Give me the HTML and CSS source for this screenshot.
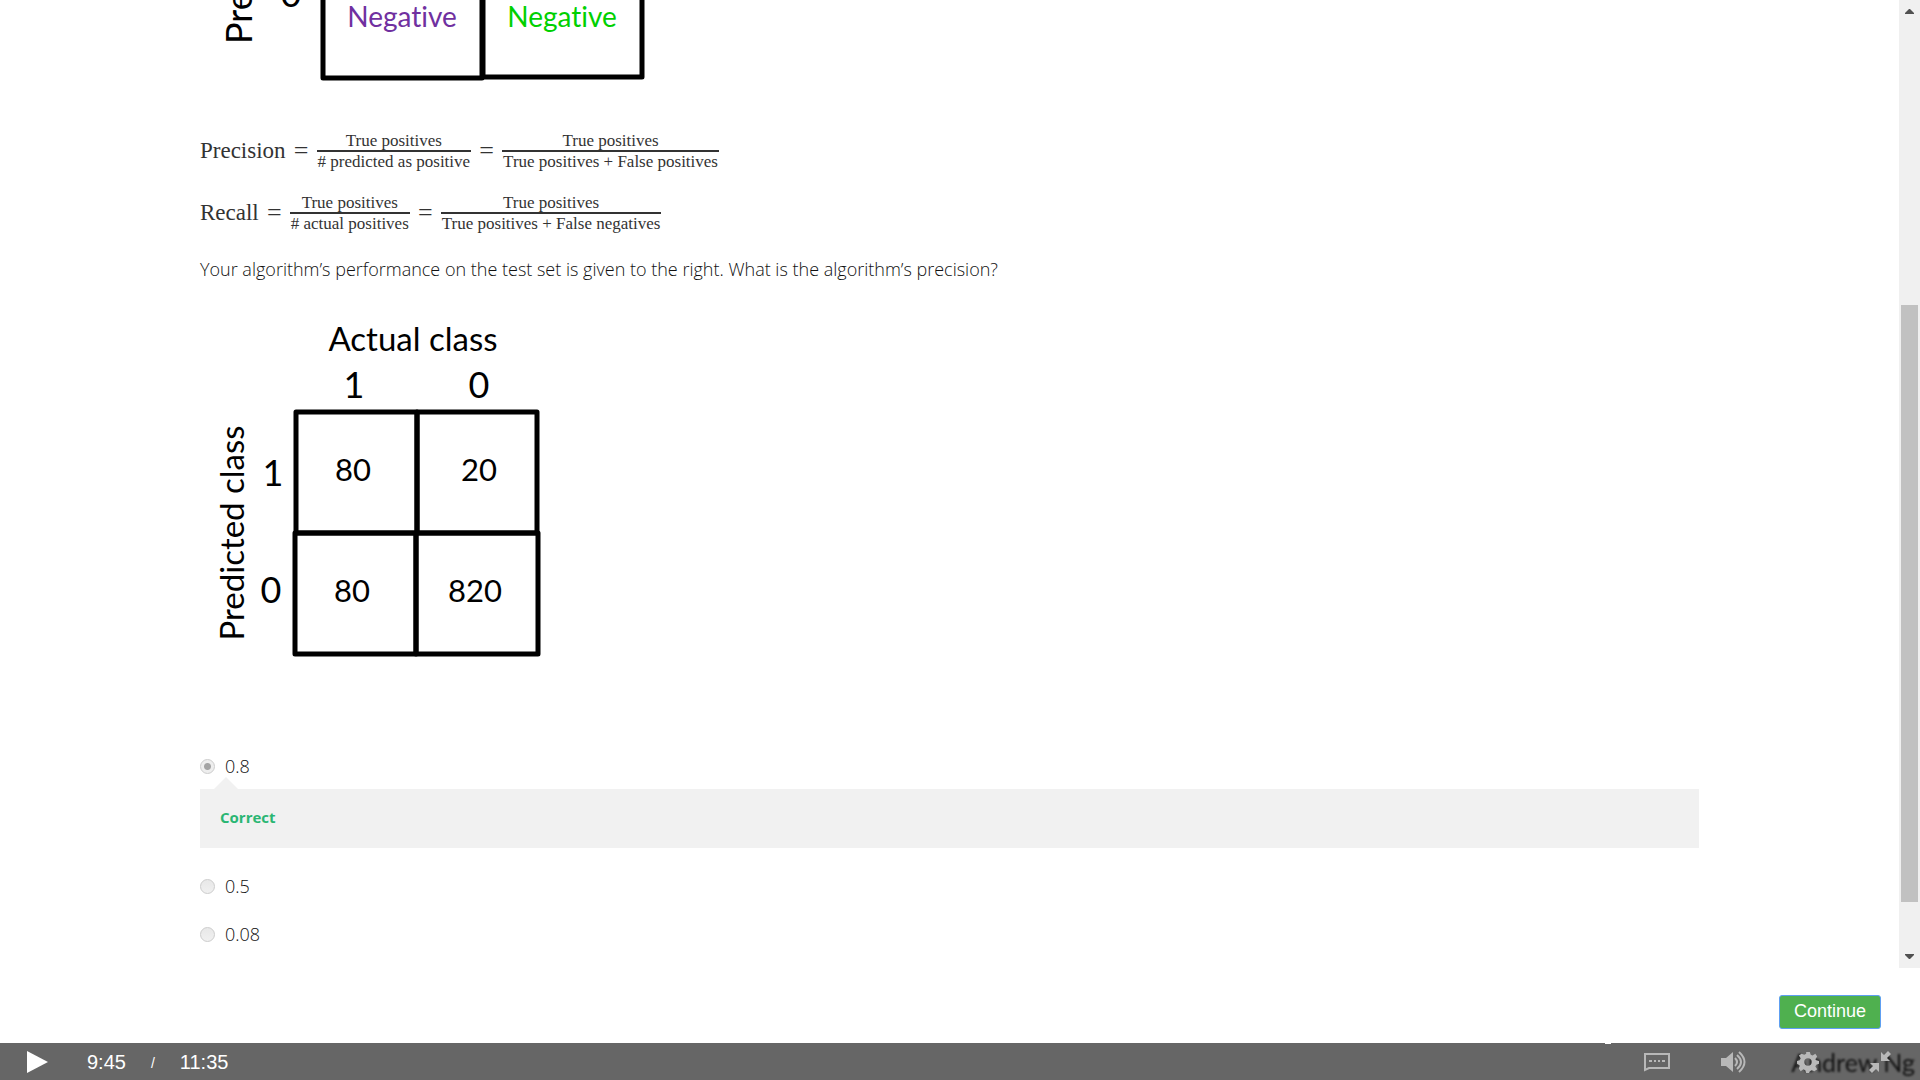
FILE: index.html
```html
<!DOCTYPE html>
<html lang="en">
<head>
<meta charset="utf-8">
<title>Video quiz</title>
<link rel="stylesheet" href="styles.css">
</head>
<body>
<main class="viewer">
  <form class="question">
    <svg class="figure figure-top" width="480" height="121" viewBox="0 0 480 121" role="img" aria-label="Confusion matrix, lower row">
      <g class="grid-lines">
        <rect x="123" y="-83" width="159" height="161"/>
        <rect x="283" y="-84" width="159" height="161"/>
      </g>
      <text class="axis-large" transform="translate(52 44) rotate(-90)">Predicted class</text>
      <text class="axis-large" x="91" y="7" text-anchor="middle">0</text>
      <g class="cell-word" text-anchor="middle">
        <text class="purple" x="202" y="27">Negative</text>
        <text class="green" x="362" y="27">Negative</text>
      </g>
    </svg>

    <div class="formulas">
      <div class="formula">
        <span>Precision</span><span class="equals">=</span>
        <span class="fraction"><span>True positives</span><span class="denominator"># predicted as positive</span></span>
        <span class="equals">=</span>
        <span class="fraction"><span>True positives</span><span class="denominator">True positives + False positives</span></span>
      </div>
      <div class="formula">
        <span>Recall</span><span class="equals">=</span>
        <span class="fraction"><span>True positives</span><span class="denominator"># actual positives</span></span>
        <span class="equals">=</span>
        <span class="fraction"><span>True positives</span><span class="denominator">True positives + False negatives</span></span>
      </div>
    </div>

    <p class="prompt">Your algorithm’s performance on the test set is given to the right. What is the algorithm’s precision?</p>

    <svg class="figure" width="360" height="360" viewBox="0 0 360 360" role="img" aria-label="Confusion matrix for the test set">
      <g class="grid-lines">
        <rect x="96" y="102" width="121" height="121"/>
        <rect x="217" y="102" width="120" height="121"/>
        <rect x="95" y="223" width="121" height="121"/>
        <rect x="216" y="223" width="122" height="121"/>
      </g>
      <g text-anchor="middle">
        <text class="axis-title" x="213" y="41">Actual class</text>
        <text class="axis-title" transform="translate(44 223) rotate(-90)">Predicted class</text>
        <g class="axis-value">
          <text x="154" y="88">1</text>
          <text x="279" y="88">0</text>
          <text x="73" y="176">1</text>
          <text x="71" y="293">0</text>
        </g>
        <g class="cell-value">
          <text x="153" y="171">80</text>
          <text x="279" y="171">20</text>
          <text x="152" y="292">80</text>
          <text x="275" y="292">820</text>
        </g>
      </g>
    </svg>

    <div class="options">
      <label class="option"><input type="radio" name="answer" checked>0.8</label>
      <div class="feedback">Correct</div>
      <label class="option"><input type="radio" name="answer">0.5</label>
      <label class="option"><input type="radio" name="answer">0.08</label>
    </div>
  </form>
  <div class="scrollbar" aria-hidden="true">
    <svg width="9" height="5" viewBox="0 0 9 5"><path d="M0 5V4L4 0h1l4 4v1z"/></svg>
    <div class="track"><div class="thumb"></div></div>
    <svg width="9" height="5" viewBox="0 0 9 5"><path d="M0 0v1l4 4h1l4-4V0z"/></svg>
  </div>
</main>

<div class="actions"><button class="continue" type="button">Continue</button></div>

<footer class="player">
  <span class="watermark">Andrew Ng</span>
  <button class="control play" type="button" aria-label="Play"><svg width="22" height="24" viewBox="0 0 22 24"><path d="M0 1l21 11L0 23z"/></svg></button>
  <div class="time"><span>9:45</span><span class="slash">/</span><span>11:35</span></div>
  <div class="tools">
    <button class="control" type="button" aria-label="Subtitles"><svg width="28" height="20" viewBox="0 0 28 20"><path class="line" d="M2 2h24v14H6l-4 2z"/><path d="M6 8h3v2H6zM11 8h2v2h-2zM15 8h2v2h-2zM19 8h3v2h-3z"/></svg></button>
    <button class="control" type="button" aria-label="Volume"><svg width="26" height="22" viewBox="0 0 26 22"><path d="M0 7h5l7-6v20l-7-6H0z"/><path class="line" d="M14 7q4 4 0 8M16 4q8 7 0 14M18 1q11 10 0 20"/></svg></button>
    <button class="control" type="button" aria-label="Settings"><svg width="22" height="22" viewBox="0 0 24 24"><path fill-rule="evenodd" d="M10 1h4l1 3 2 1 3-2 2 3-2 3 1 1 3 1v3l-3 1-1 2 2 3-3 2-3-1-2 1-1 2h-3l-1-3-2-1-3 2-2-3 1-3-1-1-2-1v-3l3-1 1-2-2-3 3-2 3 1 2-1zM12 8a4 4 0 1 0 0 8 4 4 0 0 0 0-8z"/></svg></button>
    <button class="control" type="button" aria-label="Exit full screen"><svg width="22" height="22" viewBox="0 0 22 22"><path d="M12 1v9h9l-3-3 4-4-3-3-4 4zM10 21v-9H1l3 3-4 4 3 3 4-4z"/></svg></button>
  </div>
</footer>
</body>
</html>
```
FILE: styles.css
```css
* { box-sizing: border-box; }
body {
  margin: 0;
  height: 100vh;
  display: flex;
  flex-direction: column;
  overflow: hidden;
  background: #fff;
  color: #333;
  font-family: "Open Sans", "Noto Sans", sans-serif;
}
button { border: 0; padding: 0; }
.viewer { flex: 1; min-height: 0; display: flex; }
.question { flex: 1; min-width: 0; padding: 0 200px; overflow: hidden; }

.figure { display: block; font-family: Lato, sans-serif; font-variant-ligatures: none; fill: #000; }
.grid-lines { fill: none; stroke: #000; stroke-width: 5px; stroke-linejoin: round; }
.axis-large { font-size: 36px; }
.axis-title { font-size: 33px; }
.axis-value { font-size: 36px; }
.cell-value { font-size: 31px; }
.cell-word { font-size: 28px; }
.purple { fill: #7030a0; }
.green { fill: #00d000; }

.formulas {
  display: flex;
  flex-direction: column;
  gap: 22px;
  padding-top: 10px;
  font-family: "Liberation Serif", serif;
}
.formula { display: flex; align-items: center; height: 40px; font-size: 23px; line-height: 26px; }
.equals { width: 31px; text-align: center; font-size: 26px; }
.fraction { display: flex; flex-direction: column; text-align: center; font-size: 17px; line-height: 19px; }
.denominator { border-top: 2px solid #333; padding: 0 1px; }

.prompt { margin: 22px 0 27px; color: #111; font-size: 18px; line-height: 28px; font-weight: 300; }

.options { padding-top: 84px; }
.option { display: flex; align-items: center; gap: 10px; height: 24px; margin-bottom: 24px; color: #111; font-size: 18px; font-weight: 300; }
.option input {
  appearance: none;
  width: 15px;
  height: 15px;
  margin: 0;
  border: 1px solid #ccc;
  border-radius: 50%;
  background: linear-gradient(#e8e8e8, #f0f0f0);
}
.option input:checked { background: radial-gradient(circle, #a4a4a4 3px, #eee 4px); }
.feedback {
  position: relative;
  margin: -13px 0 26px;
  padding: 16px 20px 19px;
  background: #f1f1f1;
  color: #2bb673;
  font-size: 15px;
  font-weight: 700;
  line-height: 24px;
}
.feedback::before {
  content: "";
  position: absolute;
  left: 14px;
  top: -12px;
  border: 12px solid transparent;
  border-top: 0;
  border-bottom-color: #f1f1f1;
}

.scrollbar {
  width: 21px;
  padding: 9px 2px;
  display: flex;
  flex-direction: column;
  align-items: center;
  background: #f0f0f0;
  fill: #505050;
}
.track { flex: 1; align-self: stretch; display: flex; flex-direction: column; padding: 291px 0 52px; }
.thumb { flex: 1; background: #c1c1c1; }

.actions { display: flex; justify-content: flex-end; padding: 27px 39px 14px; }
.continue {
  width: 102px;
  height: 34px;
  border: 1px solid #5e9ff2;
  border-radius: 3px;
  background: #4fb04f;
  color: #fff;
  font: 18px "Liberation Sans", sans-serif;
  padding-bottom: 1px;
}

.player {
  position: relative;
  display: flex;
  align-items: center;
  height: 37px;
  padding: 0 29px 0 27px;
  background: #666;
  color: #fff;
  font: 20px "Liberation Sans", sans-serif;
}
.player::before {
  content: "";
  position: absolute;
  left: calc(100% - 315px);
  top: 0;
  width: 6px;
  height: 1px;
  background: #fff;
}
.control { display: flex; background: none; fill: #b8b8b8; }
.play { fill: #fff; }
.line { fill: none; stroke: #b8b8b8; stroke-width: 2px; }
.time { display: flex; align-items: center; gap: 25px; margin-left: 38px; padding-top: 2px; }
.slash { font-size: 14px; }
.tools { position: relative; display: flex; align-items: center; gap: 50px; margin-left: auto; }
.watermark {
  position: absolute;
  right: 5px;
  bottom: 2px;
  color: #111;
  font: 25px/32px Lato, sans-serif;
  filter: blur(1px);
}
```
